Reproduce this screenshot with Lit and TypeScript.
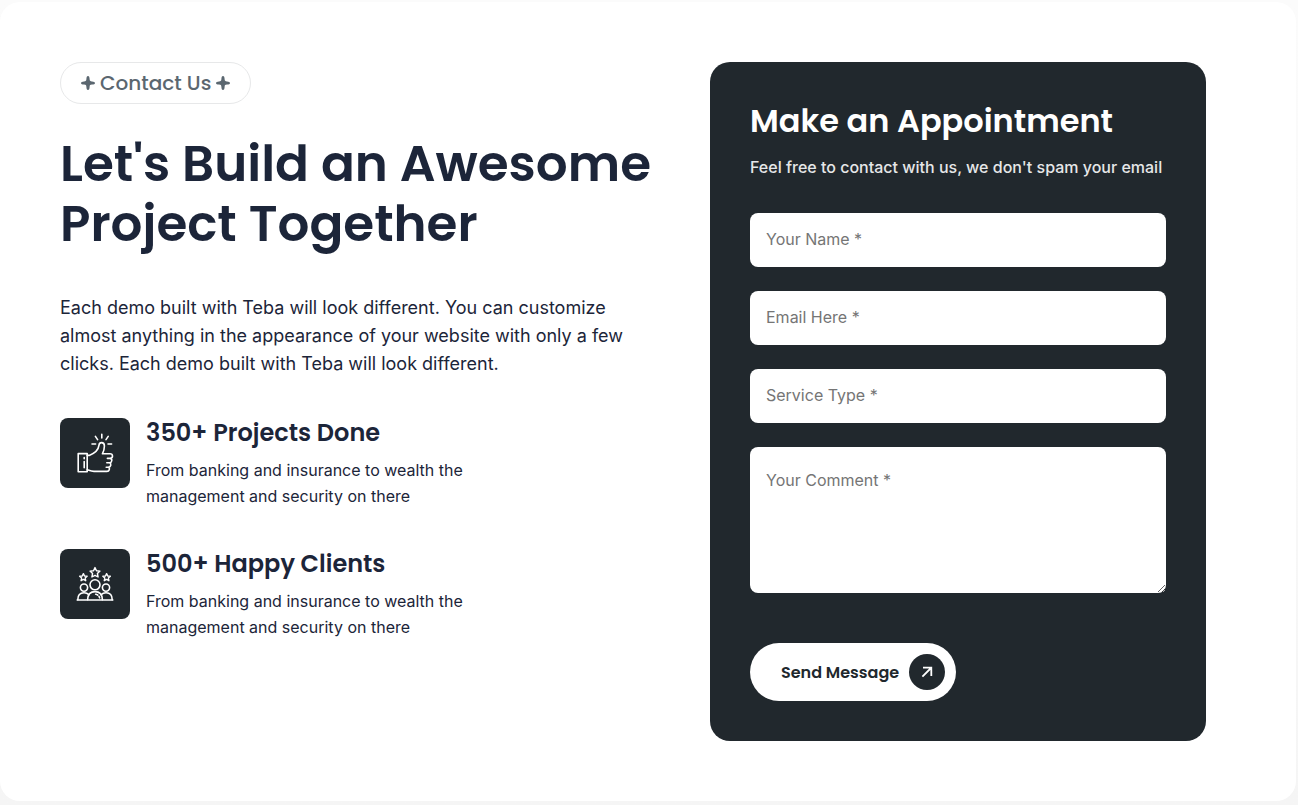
import { LitElement, html, css, svg } from "lit";
import { customElement } from "lit/decorators.js";

const sparkle = html`<svg class="sparkle" viewBox="0 0 16 16" aria-hidden="true">
  <path d="M8 1C9.1 1 9.5 2.2 9.6 4C9.7 5.9 10.1 6.3 12 6.4C13.8 6.5 15 6.9 15 8C15 9.1 13.8 9.5 12 9.6C10.1 9.7 9.7 10.1 9.6 12C9.5 13.8 9.1 15 8 15C6.9 15 6.5 13.8 6.4 12C6.3 10.1 5.9 9.7 4 9.6C2.2 9.5 1 9.1 1 8C1 6.9 2.2 6.5 4 6.4C5.9 6.3 6.3 5.9 6.4 4C6.5 2.2 6.9 1 8 1Z"/>
</svg>`;

const thumb = svg`
  <path d="M3.2 22.6H12.2V40.8H3.2Z"/>
  <path d="M9.2 30.5V36.8M9.2 26.6V27.8"/>
  <path d="M12.2 24.4H14.2C19 22.6 23.4 19.6 24 14.2C24.2 12.4 25.2 11.6 26.6 11.6C28.4 11.6 29.4 13 29.4 15C29.4 18 28.6 20.6 27.4 22.8H35C38.2 22.8 38.4 27.2 35.2 27.4H32.4M35.2 27.4C37.6 28 37.2 31.6 34.6 31.8H31.8M34.6 31.8C36.6 32.6 36 36 33.6 36.2H31.2M33.6 36.2C35.2 37.4 34.4 40.4 32 40.4H19C16.6 40.4 14.6 39.6 12.2 38.8"/>
  <path d="M26.8 3.2V7M20.4 5.4L22.6 8.6M33.2 5.4L31 8.6M17 13H20.6M33 13H36.6"/>
`;

const star = (x: number, y: number, s: number) => svg`
  <path transform="translate(${x} ${y}) scale(${s})" stroke-width=${1.4 / s}
    d="M0 -5L1.5 -1.9L5 -1.5L2.4 .9L3.1 4.4L0 2.7L-3.1 4.4L-2.4 .9L-5 -1.5L-1.5 -1.9Z"/>`;

const people = svg`
  ${star(20, 8.6, 1)}${star(8.4, 13.4, 0.75)}${star(31.6, 13.4, 0.75)}
  <circle cx="20" cy="20.8" r="5"/>
  <circle cx="9" cy="23.6" r="3.6"/>
  <circle cx="31" cy="23.6" r="3.6"/>
  <path d="M12.6 35.8C12.8 30.8 15.6 27.6 20 27.6C24.4 27.6 27.2 30.8 27.4 35.8"/>
  <path d="M2.8 35.8C2.8 31.4 5 28.8 9 28.8C11 28.8 12.6 29.4 13.8 30.6"/>
  <path d="M37.2 35.8C37.2 31.4 35 28.8 31 28.8C29 28.8 27.4 29.4 26.2 30.6"/>
  <path d="M2.2 36H37.8M20.6 30.2C21.6 30.3 22.2 30.6 22.8 31.1M24 32.4L24.6 33.8"/>
`;

const features = [
  { icon: thumb, box: "0 0 40 44", cls: "glyph tall", title: "350+ Projects Done" },
  { icon: people, box: "0 0 40 40", cls: "glyph", title: "500+ Happy Clients" },
];

@customElement("app-root")
export class AppRoot extends LitElement {
  static styles = css`
    :host {
      display: block;
      box-sizing: border-box;
      min-height: 100vh;
      padding: 2px 2px 4px 0;
      background: linear-gradient(#fbfbfb, #f5f5f5);
      font-family: Inter, sans-serif;
      color: #1c2539;
    }
    * { box-sizing: border-box; }
    h1, h2, h3, p { margin: 0; }
    .panel {
      display: grid;
      grid-template-columns: minmax(0, 600fr) minmax(0, 496fr);
      gap: 50px;
      align-items: start;
      padding: 60px 90px 60px 60px;
      border-radius: 20px;
      background: #fff;
    }
    h1, h2, h3, .pill, .send { font-family: Poppins, Inter, sans-serif; }
    .pill {
      display: inline-flex;
      align-items: center;
      gap: 4px;
      height: 42px;
      padding: 0 19px;
      border: 1px solid #e7e8e9;
      border-radius: 21px;
      color: #5b6770;
      font-size: 20px;
      font-weight: 500;
    }
    .sparkle { width: 16px; height: 16px; fill: currentColor; }
    h1 {
      margin-top: 30px;
      font-size: 50px;
      line-height: 60px;
      font-weight: 600;
    }
    .lead {
      max-width: 570px;
      margin: 40px 0;
      font-size: 18px;
      line-height: 28px;
    }
    .features { display: grid; gap: 40px; }
    .feature { display: flex; gap: 16px; }
    .tile {
      display: grid;
      place-items: center;
      flex: none;
      width: 70px;
      height: 70px;
      border-radius: 8px;
      background: #21282d;
    }
    .glyph {
      width: 40px;
      height: 40px;
      fill: none;
      stroke: #fff;
      stroke-width: 1.6;
      stroke-linecap: round;
      stroke-linejoin: round;
    }
    .tall { height: 44px; }
    h3 { font-size: 24px; line-height: 30px; font-weight: 600; }
    .feature p {
      max-width: 330px;
      margin-top: 9px;
      font-size: 16px;
      line-height: 26px;
    }
    .card {
      display: flex;
      flex-direction: column;
      align-items: stretch;
      padding: 40px;
      border-radius: 20px;
      background: #21282d;
    }
    h2 { color: #fff; font-size: 32px; line-height: 38px; font-weight: 600; }
    .note {
      margin: 14px 0 33px;
      color: #e6e7e8;
      font-size: 16px;
      line-height: 26px;
      font-weight: 500;
    }
    .fields { display: grid; gap: 24px; }
    .field {
      display: block;
      width: 100%;
      height: 54px;
      padding: 0 16px 2px;
      border: 0;
      border-radius: 8px;
      background: #fff;
      color: #1c2539;
      font: 400 16px/26px Inter, sans-serif;
    }
    .field::placeholder { color: #757575; opacity: 1; }
    .area { height: 146px; padding: 20px 16px; resize: vertical; }
    .send {
      display: flex;
      align-items: center;
      align-self: flex-start;
      gap: 10px;
      height: 58px;
      margin-top: 50px;
      padding: 0 11px 0 31px;
      border: 0;
      border-radius: 29px;
      background: #fff;
      color: #21282d;
      font-size: 16px;
      font-weight: 600;
      cursor: pointer;
    }
    .round {
      display: grid;
      place-items: center;
      width: 36px;
      height: 36px;
      border-radius: 50%;
      background: #21282d;
    }
    .arrow { width: 12px; height: 12px; fill: none; stroke: #fff; stroke-width: 1.8; }
  `;

  render() {
    return html`
      <main class="panel">
        <section>
          <div class="pill">${sparkle}<span>Contact Us</span>${sparkle}</div>
          <h1>Let's Build an Awesome Project Together</h1>
          <p class="lead">
            Each demo built with Teba will look different. You can customize almost anything in
            the appearance of your website with only a few clicks. Each demo built with Teba will
            look different.
          </p>
          <div class="features">
            ${features.map(
              (f) => html`<article class="feature">
                <div class="tile">
                  <svg class=${f.cls} viewBox=${f.box} aria-hidden="true">${f.icon}</svg>
                </div>
                <div>
                  <h3>${f.title}</h3>
                  <p>From banking and insurance to wealth the management and security on there</p>
                </div>
              </article>`
            )}
          </div>
        </section>
        <form class="card" @submit=${(e: Event) => e.preventDefault()}>
          <h2>Make an Appointment</h2>
          <p class="note">Feel free to contact with us, we don't spam your email</p>
          <div class="fields">
            <input class="field" type="text" name="name" placeholder="Your Name *" aria-label="Your Name" />
            <input class="field" type="email" name="email" placeholder="Email Here *" aria-label="Email Here" />
            <input class="field" type="text" name="service" placeholder="Service Type *" aria-label="Service Type" />
            <textarea class="field area" name="comment" placeholder="Your Comment *" aria-label="Your Comment"></textarea>
          </div>
          <button class="send" type="submit">
            Send Message
            <span class="round">
              <svg class="arrow" viewBox="0 0 12 12" aria-hidden="true"><path d="M1.4 10.6L10 2M2 1.6H10.3V10"/></svg>
            </span>
          </button>
        </form>
      </main>
    `;
  }
}
